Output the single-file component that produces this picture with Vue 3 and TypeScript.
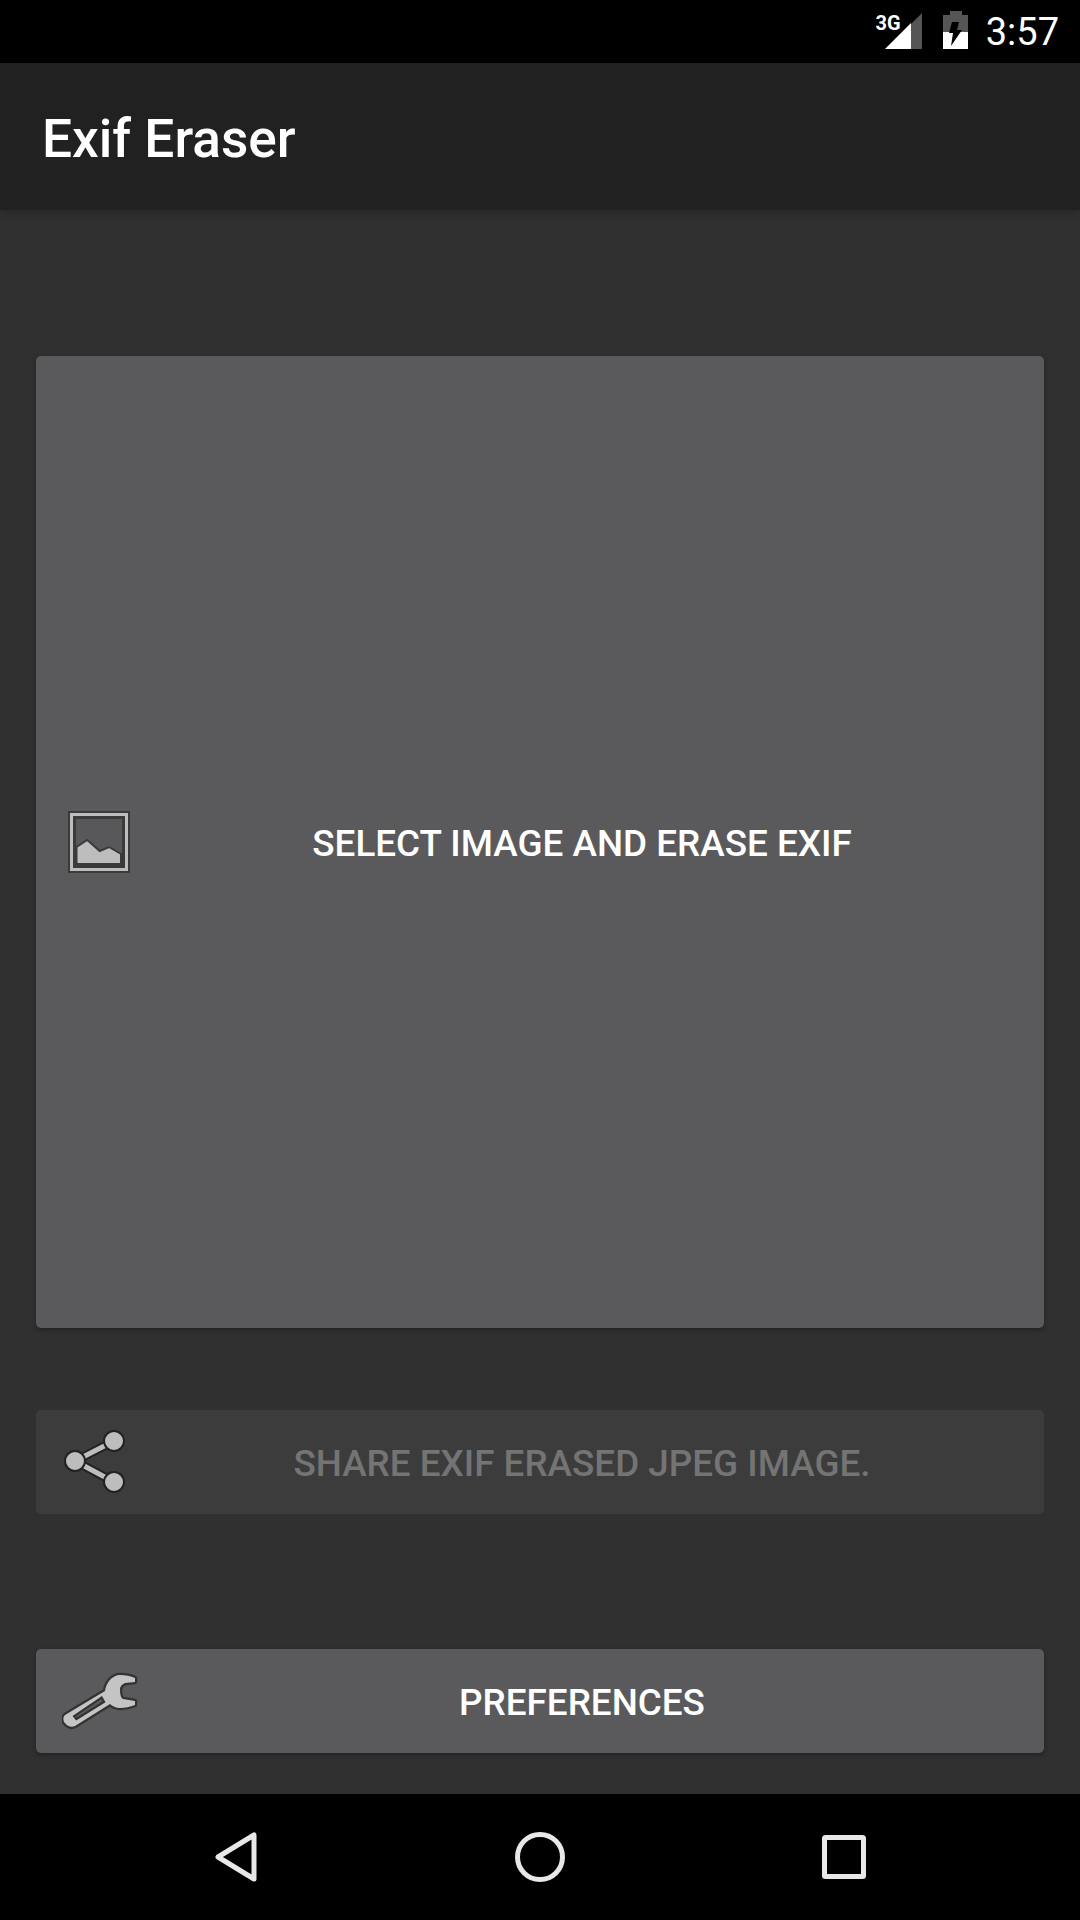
<template>
  <div class="screen">
    <div class="status-bar">
      <div class="signal">
        <span class="network">3G</span>
        <svg width="37" height="36" viewBox="0 0 37 36">
          <path d="M26 11 L37 0 V36 H26 Z" fill="#555" />
          <path d="M0 36 L26 10 V36 Z" fill="#fff" />
        </svg>
      </div>
      <svg class="battery" width="25" height="38" viewBox="0 0 25 38">
        <path d="M7 0 H19 V4 H25 V21 H0 V4 H7 Z" fill="#555" />
        <path d="M0 21 H25 V38 H0 Z" fill="#fff" />
        <path d="M16 11 H9 L6 22 H10 L8 35 L19 19 H14 Z" fill="#000" />
      </svg>
      <span class="clock">{{ time }}</span>
    </div>

    <header class="toolbar">{{ title }}</header>

    <main class="content">
      <button class="action action-main" type="button">
        <span class="action-icon">
          <svg class="icon-image" width="64" height="64" viewBox="0 0 64 64">
            <rect x="2" y="2" width="60" height="60" fill="#bdbdbd" stroke="#3a3a3a" stroke-width="2" />
            <rect x="7.5" y="7.5" width="49" height="49" fill="#58585a" stroke="#3a3a3a" stroke-width="3" />
            <path d="M9.5 37 L20.3 30 L32.7 41 L42 37 L54 44 V54 H9.5 Z" fill="#bdbdbd" stroke="#3a3a3a" stroke-width="2" />
          </svg>
        </span>
        <span class="action-label">SELECT IMAGE AND ERASE EXIF</span>
      </button>

      <button class="action action-share" type="button" disabled>
        <span class="action-icon">
          <svg class="icon-share" width="64" height="64" viewBox="0 0 64 64">
            <path d="M50 11 L11 31 L50 52" fill="none" stroke="#222" stroke-width="9" />
            <path d="M50 11 L11 31 L50 52" fill="none" stroke="#bdbdbd" stroke-width="5" />
            <circle cx="11" cy="31" r="10" fill="#bdbdbd" stroke="#222" stroke-width="2" />
            <circle cx="50" cy="11" r="10" fill="#bdbdbd" stroke="#222" stroke-width="2" />
            <circle cx="50" cy="52" r="10" fill="#bdbdbd" stroke="#222" stroke-width="2" />
          </svg>
        </span>
        <span class="action-label">SHARE EXIF ERASED JPEG IMAGE.</span>
      </button>

      <button class="action action-prefs" type="button">
        <span class="action-icon">
          <svg width="76" height="64" viewBox="0 0 76 64">
            <path
              class="wrench"
              d="M3 46 L43 22 C44 14 50 6 58 6 C63 6 69 7 73 9 V13 L63 14 C59 16 58 18 58 21 C58 26 59 29 61 30 L73 32 V36 C68 38 63 39 58 39 C54 39 50 37 48 35 L13 57 C9 59 5 57 2 53 C1 50 1 48 3 46 Z M10.5 47 L14.2 51.5 L43.5 33.2 L40 27 Z"
              fill="#c4c4c4"
              fill-rule="evenodd"
              stroke="#333"
              stroke-width="4.5"
              stroke-linejoin="round"
            />
          </svg>
        </span>
        <span class="action-label">PREFERENCES</span>
      </button>
    </main>

    <nav class="nav-bar">
      <svg width="42" height="50" viewBox="0 0 42 50">
        <path d="M39 3 V47 L3 25 Z" fill="none" stroke="#e8e8e8" stroke-width="5" stroke-linejoin="round" />
      </svg>
      <svg width="50" height="50" viewBox="0 0 50 50">
        <circle cx="25" cy="25" r="22.5" fill="none" stroke="#e8e8e8" stroke-width="5" />
      </svg>
      <svg width="44" height="44" viewBox="0 0 44 44">
        <rect x="2.5" y="2.5" width="39" height="39" rx="1" fill="none" stroke="#e8e8e8" stroke-width="5" />
      </svg>
    </nav>
  </div>
</template>

<script setup lang="ts">
const title = "Exif Eraser";
const time = "3:57";
</script>

<style>
html,
body {
  margin: 0;
  background: #303030;
}
</style>

<style scoped>
.screen {
  width: 1080px;
  height: 1920px;
  display: flex;
  flex-direction: column;
  font-family: Roboto, "Liberation Sans", sans-serif;
  background: #303030;
  overflow: hidden;
}

.status-bar {
  height: 63px;
  flex: none;
  display: flex;
  align-items: flex-start;
  justify-content: flex-end;
  padding: 11px 21px 0 0;
  box-sizing: border-box;
  background: #000;
  color: #fff;
}

.signal {
  position: relative;
  width: 37px;
  height: 36px;
  margin: 2px 21px 0 0;
}

.signal svg {
  display: block;
}

.network {
  position: absolute;
  top: 0;
  right: 21px;
  font-size: 20px;
  line-height: 20px;
  font-weight: 700;
}

.battery {
  margin-right: 18px;
}

.clock {
  font-size: 38px;
  line-height: 44px;
  margin-top: -1px;
}

.toolbar {
  height: 147px;
  flex: none;
  display: flex;
  align-items: center;
  padding: 5px 42px 0;
  box-sizing: border-box;
  background: #212121;
  color: #fff;
  font-size: 53.2px;
  font-weight: 500;
  box-shadow: 0 3px 8px rgba(0, 0, 0, 0.2);
  position: relative;
}

.content {
  flex: 1;
  display: flex;
  flex-direction: column;
  padding: 146px 36px 0;
  background: #303030;
}

.action {
  display: flex;
  align-items: center;
  width: 100%;
  padding: 0;
  border: none;
  border-radius: 5px;
  font-family: inherit;
  font-size: 36.85px;
  font-weight: 500;
  color: #fff;
  background: #5a5a5c;
  box-shadow: 0 2px 5px rgba(0, 0, 0, 0.3);
}

.action-icon {
  width: 84px;
  box-sizing: border-box;
  padding-left: 26px;
  flex: none;
  display: flex;
}

.action-icon svg {
  display: block;
  flex: none;
}

.icon-image {
  margin-left: 5px;
}

.icon-share {
  margin-left: 2px;
}

.wrench {
  paint-order: stroke;
}

.action-label {
  flex: 1;
  text-align: center;
  padding-top: 3px;
}

.action-main {
  height: 972px;
}

.action-share {
  height: 104px;
  margin-top: 82px;
  background: #3c3c3c;
  color: #747474;
  box-shadow: none;
}

.action-prefs {
  height: 104px;
  margin-top: 135px;
}

.nav-bar {
  height: 126px;
  flex: none;
  display: grid;
  grid-template-columns: 42px 50px 44px;
  justify-content: space-between;
  align-items: center;
  padding: 0 214px 0 215px;
  box-sizing: border-box;
  background: #000;
}
</style>
